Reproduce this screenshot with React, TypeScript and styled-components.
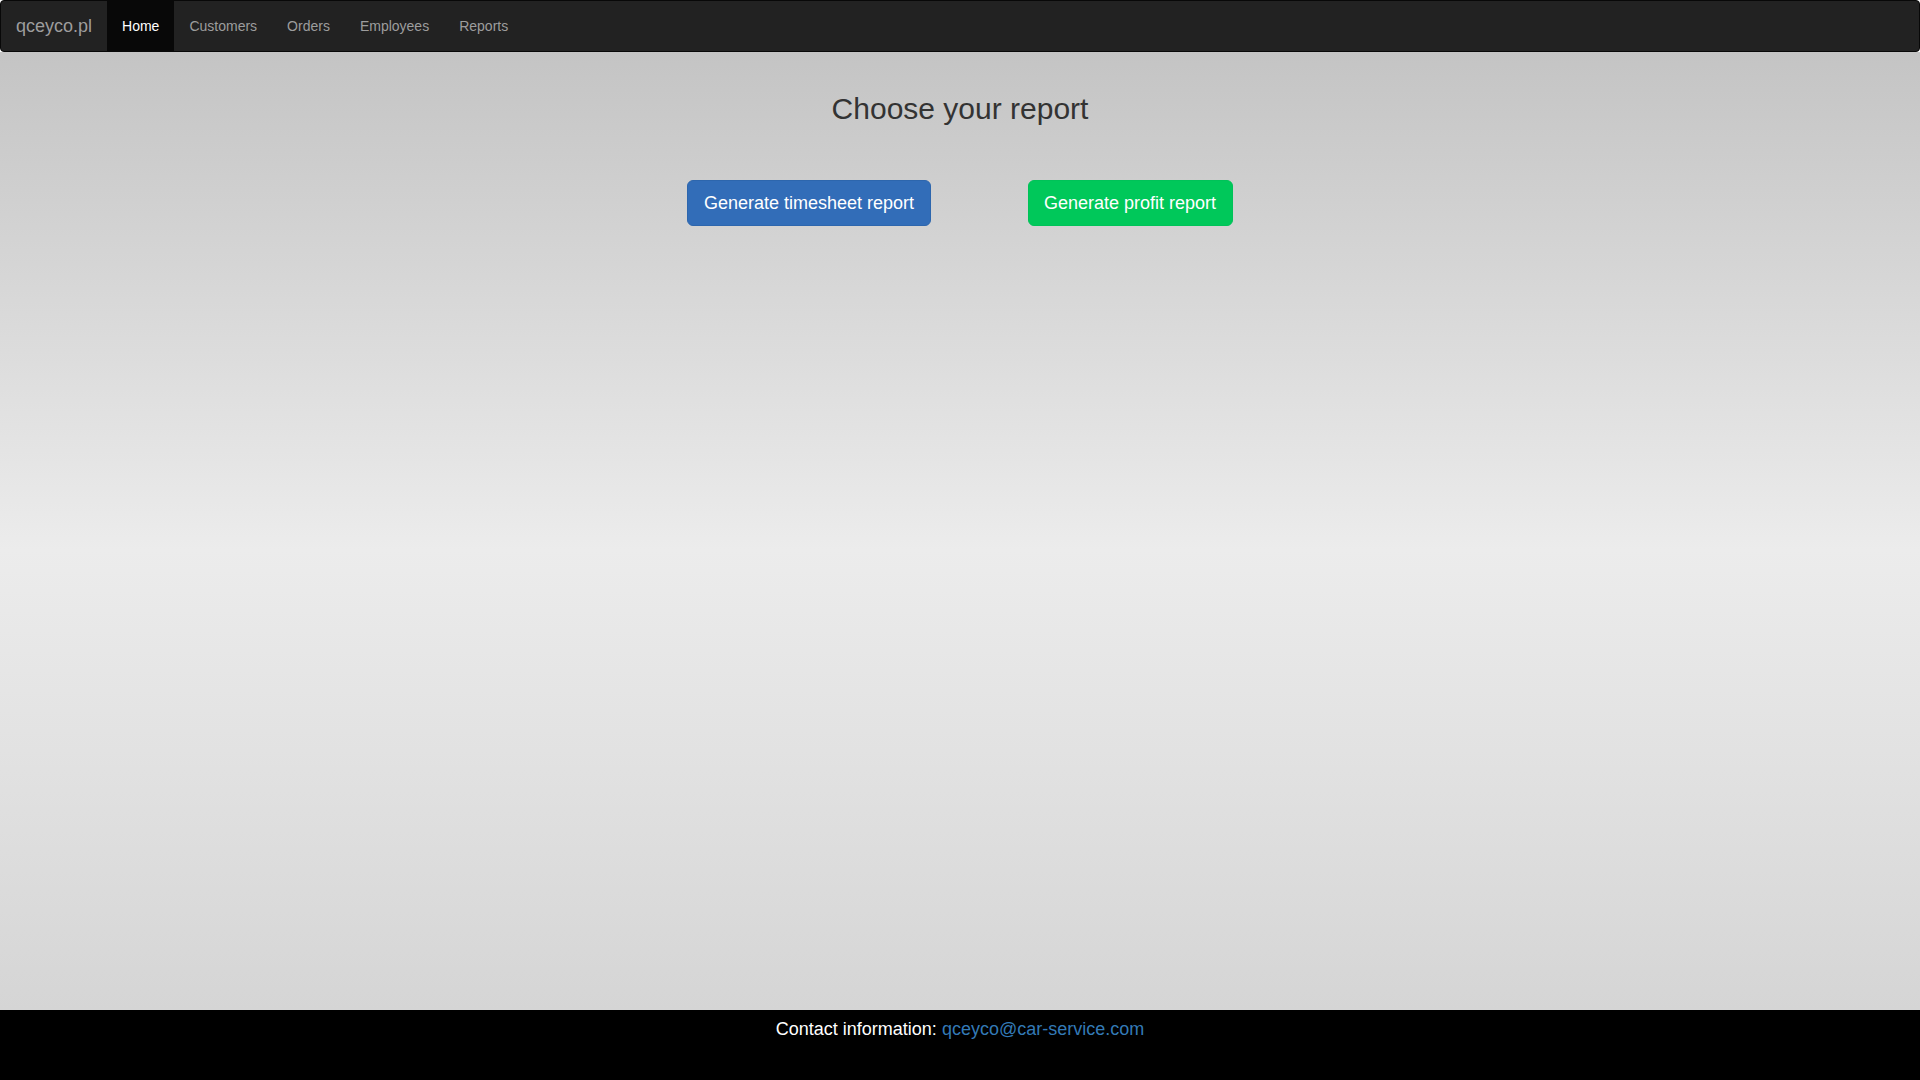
import React from "react";
import styled, { createGlobalStyle } from "styled-components";

const GlobalStyle = createGlobalStyle`
  html, body {
    margin: 0;
    padding: 0;
  }
  body {
    font-family: "Liberation Sans", Arial, Helvetica, sans-serif;
    font-size: 14px;
    line-height: 1.42857;
    color: #333;
  }
  * { box-sizing: border-box; }
`;

const Page = styled.div`
  min-height: 100vh;
  display: flex;
  flex-direction: column;
`;

const Navbar = styled.nav`
  height: 52px;
  background: #222;
  border: 1px solid #080808;
  border-radius: 4px;
  display: flex;
  align-items: stretch;
`;

const Brand = styled.a`
  display: block;
  padding: 15px;
  font-size: 18px;
  line-height: 20px;
  height: 50px;
  color: #9d9d9d;
  text-decoration: none;
`;

const NavList = styled.ul`
  display: flex;
  list-style: none;
  margin: 0;
  padding: 0;
`;

const NavLink = styled.a<{ $active?: boolean }>`
  display: block;
  padding: 15px;
  line-height: 20px;
  height: 50px;
  font-size: 14px;
  text-decoration: none;
  color: ${(p) => (p.$active ? "#fff" : "#9d9d9d")};
  background: ${(p) => (p.$active ? "#080808" : "transparent")};
`;

const Main = styled.main`
  flex: 1;
  background: linear-gradient(to bottom, #c4c4c4 0%, #ececec 52%, #d5d5d5 100%);
  padding-top: 20px;
  display: flex;
  flex-direction: column;
  align-items: center;
`;

const Title = styled.h2`
  margin: 20px 0 0;
  font-size: 30px;
  font-weight: 500;
  line-height: 33px;
  color: #333;
`;

const ButtonRow = styled.div`
  display: flex;
  gap: 97px;
  margin-top: 55px;
`;

const Button = styled.button<{ $variant: "blue" | "green" }>`
  font-family: "Liberation Sans", Arial, Helvetica, sans-serif;
  font-size: 18px;
  line-height: 24px;
  padding: 10px 15.5px;
  height: 46px;
  border-radius: 6px;
  color: #fff;
  cursor: pointer;
  border: 1px solid ${(p) => (p.$variant === "blue" ? "#2d66ad" : "#00c258")};
  background: ${(p) => (p.$variant === "blue" ? "#326db8" : "#00c85a")};
`;

const Footer = styled.footer`
  height: 70px;
  background: #000;
  color: #fff;
  font-size: 18px;
  line-height: 25.7px;
  padding-top: 7px;
  text-align: center;
`;

const Link = styled.a`
  color: #337ab7;
  text-decoration: none;
`;

export default function App() {
  return (
    <Page>
      <GlobalStyle />
      <Navbar>
        <Brand href="#">qceyco.pl</Brand>
        <NavList>
          <li><NavLink href="#" $active>Home</NavLink></li>
          <li><NavLink href="#">Customers</NavLink></li>
          <li><NavLink href="#">Orders</NavLink></li>
          <li><NavLink href="#">Employees</NavLink></li>
          <li><NavLink href="#">Reports</NavLink></li>
        </NavList>
      </Navbar>
      <Main>
        <Title>Choose your report</Title>
        <ButtonRow>
          <Button $variant="blue">Generate timesheet report</Button>
          <Button $variant="green">Generate profit report</Button>
        </ButtonRow>
      </Main>
      <Footer>
        Contact information: <Link href="#">qceyco@car-service.com</Link>
      </Footer>
    </Page>
  );
}
